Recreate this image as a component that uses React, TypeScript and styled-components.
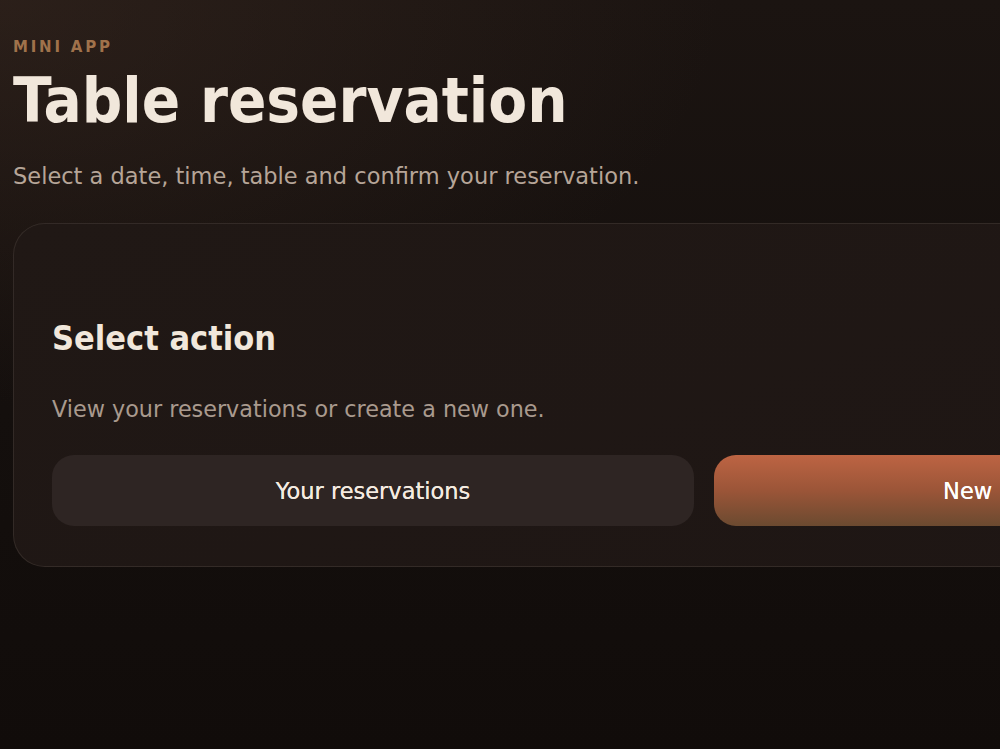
import React from "react";
import styled, { createGlobalStyle } from "styled-components";

const GlobalStyle = createGlobalStyle`
  html, body {
    margin: 0;
    padding: 0;
    background: #120d0b;
    overflow: hidden;
  }
  body {
    font-family: "DejaVu Sans", Verdana, sans-serif;
    -webkit-font-smoothing: antialiased;
  }
  * { box-sizing: border-box; }
`;

const Page = styled.div`
  width: 1408px;
  min-height: 749px;
  padding: 35px 13px 40px;
  background:
    radial-gradient(ellipse 1000px 560px at 0% 0%, rgba(70, 50, 40, 0.38), transparent 72%),
    linear-gradient(180deg, #1b1411 0%, #140f0d 55%, #110c0a 100%);
  display: flex;
  flex-direction: column;
`;

const Header = styled.header`
  display: flex;
  flex-direction: column;
`;

const Eyebrow = styled.div`
  font-size: 15px;
  font-weight: 700;
  letter-spacing: 2.8px;
  text-transform: uppercase;
  color: #a0724b;
  line-height: 24px;
`;

const Title = styled.h1`
  margin: 6px 0 0;
  font-family: "DejaVu Sans Condensed", "DejaVu Sans", sans-serif;
  font-size: 63px;
  font-weight: 700;
  line-height: 72px;
  color: #f1e7db;
`;

const Subtitle = styled.p`
  margin: 24px 0 0;
  font-size: 22.5px;
  line-height: 30px;
  color: #b6a598;
`;

const Card = styled.section`
  margin-top: 32px;
  width: 1382px;
  padding: 93px 38px 40px;
  border-radius: 32px;
  border: 1px solid rgba(255, 240, 225, 0.09);
  background: linear-gradient(160deg, #201815 0%, #1e1614 100%);
  display: flex;
  flex-direction: column;
`;

const CardTitle = styled.h2`
  margin: 0;
  font-family: "DejaVu Sans Condensed", "DejaVu Sans", sans-serif;
  font-size: 34px;
  font-weight: 700;
  line-height: 42px;
  color: #f1e7db;
`;

const CardText = styled.p`
  margin: 35px 0 0;
  font-size: 22.3px;
  line-height: 30px;
  color: #a99a8e;
`;

const Actions = styled.div`
  margin-top: 31px;
  display: grid;
  grid-template-columns: 1fr 1fr;
  gap: 20px;
`;

const ActionButton = styled.button<{ $primary?: boolean }>`
  height: 71px;
  border: none;
  border-radius: 22px;
  font-family: "DejaVu Sans", sans-serif;
  font-size: 22.5px;
  font-weight: 400;
  cursor: pointer;
  display: flex;
  align-items: center;
  justify-content: center;
  color: ${(p) => (p.$primary ? "#ffffff" : "#f4ebe0")};
  text-shadow: 0 0 0.4px currentColor;
  background: ${(p) =>
    p.$primary
      ? "linear-gradient(180deg, #bd6443 0%, #9b5538 50%, #6b4a30 100%)"
      : "#2e2523"};
`;

export default function App() {
  return (
    <>
      <GlobalStyle />
      <Page>
        <Header>
          <Eyebrow>Mini app</Eyebrow>
          <Title>Table reservation</Title>
          <Subtitle>Select a date, time, table and confirm your reservation.</Subtitle>
        </Header>
        <Card>
          <CardTitle>Select action</CardTitle>
          <CardText>View your reservations or create a new one.</CardText>
          <Actions>
            <ActionButton>Your reservations</ActionButton>
            <ActionButton $primary>New reservation</ActionButton>
          </Actions>
        </Card>
      </Page>
    </>
  );
}
